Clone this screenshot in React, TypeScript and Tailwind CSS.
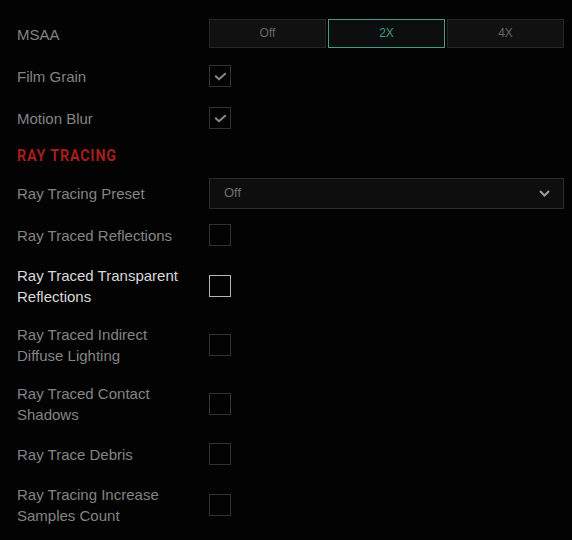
import { useState } from 'react';

type Row = { label: string; checked?: boolean; active?: boolean };

const rtRows: Row[] = [
  { label: 'Ray Traced Reflections' },
  { label: 'Ray Traced Transparent Reflections', active: true },
  { label: 'Ray Traced Indirect Diffuse Lighting' },
  { label: 'Ray Traced Contact Shadows' },
  { label: 'Ray Trace Debris' },
  { label: 'Ray Tracing Increase Samples Count' },
];

const Check = ({ checked, active }: { checked?: boolean; active?: boolean }) => (
  <div
    className={`w-[22px] h-[22px] border flex items-center justify-center ${
      active ? 'border-[#b5b5b5]' : 'border-[#323232]'
    }`}
  >
    {checked && (
      <svg width="13" height="9" viewBox="0 0 13 9" fill="none">
        <path d="M1.2 3.8 L5 7.2 L11.8 1.2" stroke="#8a8a8a" strokeWidth="2" />
      </svg>
    )}
  </div>
);

const Label = ({ text, active }: { text: string; active?: boolean }) => (
  <div className={`w-[192px] pr-4 text-[15px] leading-[21px] ${active ? 'text-[#d9d9d9]' : 'text-[#848484]'}`}>
    {text}
  </div>
);

export default function App() {
  const [msaa, setMsaa] = useState('2X');
  const [grain, setGrain] = useState(true);
  const [blur, setBlur] = useState(true);

  return (
    <div className="w-[572px] h-[540px] bg-[#030303] pl-[17px] pr-[8px] pt-[13px] overflow-hidden font-['Liberation_Sans',Arial,sans-serif]">
      <div className="flex items-center min-h-[42px]">
        <Label text="MSAA" />
        <div className="flex-1 flex gap-[2px] -mt-[2px]">
          {['Off', '2X', '4X'].map((o) => (
            <button
              key={o}
              onClick={() => setMsaa(o)}
              className={`flex-1 h-[29px] border text-[12px] ${
                msaa === o
                  ? 'border-[#4a9a85] text-[#3f9c84] bg-[#0c0f0e]'
                  : 'border-[#272727] text-[#666666] bg-[#111111]'
              }`}
            >
              {o}
            </button>
          ))}
        </div>
      </div>
      <div className="flex items-center min-h-[42px]" onClick={() => setGrain(!grain)}>
        <Label text="Film Grain" />
        <Check checked={grain} />
      </div>
      <div className="flex items-center min-h-[42px]" onClick={() => setBlur(!blur)}>
        <Label text="Motion Blur" />
        <Check checked={blur} />
      </div>

      <div className="h-[33px] flex items-center">
        <span className="inline-block origin-left scale-x-[0.84] font-['Roboto',sans-serif] font-bold text-[17px] tracking-[1px] text-[#a51c1c]">
          RAY TRACING
        </span>
      </div>

      <div className="flex items-center min-h-[42px]">
        <Label text="Ray Tracing Preset" />
        <div className="flex-1 h-[31px] bg-[#0e0e0e] border border-[#2c2c2c] flex items-center justify-between pl-[14px] pr-[13px] text-[13px] text-[#6e6e6e]">
          Off
          <svg width="11" height="7" viewBox="0 0 11 7" fill="none">
            <path d="M1 1 L5.5 5.5 L10 1" stroke="#9a9a9a" strokeWidth="2" />
          </svg>
        </div>
      </div>

      {rtRows.map((r) => (
        <div key={r.label} className="flex items-center min-h-[42px] py-[8.5px]">
          <Label text={r.label} active={r.active} />
          <Check checked={r.checked} active={r.active} />
        </div>
      ))}
    </div>
  );
}
